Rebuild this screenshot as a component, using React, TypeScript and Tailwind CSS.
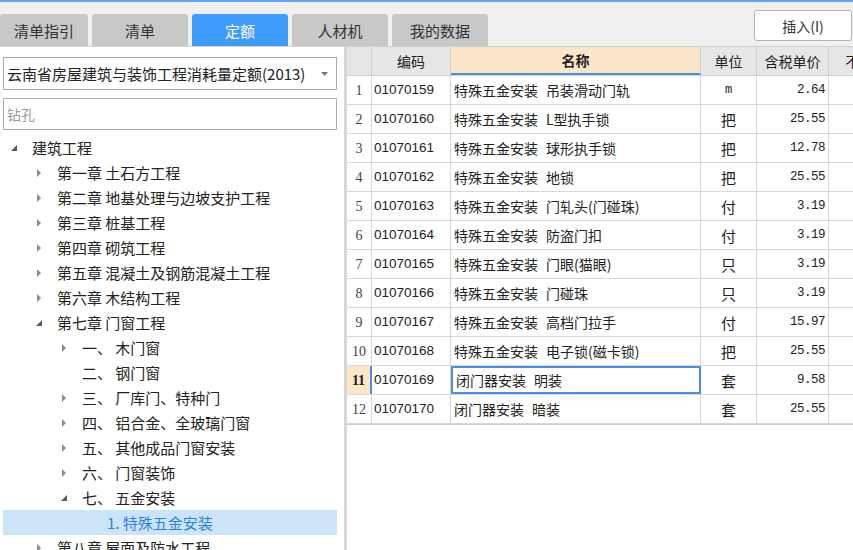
import React from 'react';

const cjk = "font-['Noto_Sans_CJK_SC','Noto_Sans',sans-serif]";

type Node = { level: number; arrow: 'open' | 'closed' | 'none'; text: string; selected?: boolean };

const tree: Node[] = [
  { level: 0, arrow: 'open', text: '建筑工程' },
  { level: 1, arrow: 'closed', text: '第一章 土石方工程' },
  { level: 1, arrow: 'closed', text: '第二章 地基处理与边坡支护工程' },
  { level: 1, arrow: 'closed', text: '第三章 桩基工程' },
  { level: 1, arrow: 'closed', text: '第四章 砌筑工程' },
  { level: 1, arrow: 'closed', text: '第五章 混凝土及钢筋混凝土工程' },
  { level: 1, arrow: 'closed', text: '第六章 木结构工程' },
  { level: 1, arrow: 'open', text: '第七章 门窗工程' },
  { level: 2, arrow: 'closed', text: '一、 木门窗' },
  { level: 2, arrow: 'none', text: '二、 钢门窗' },
  { level: 2, arrow: 'closed', text: '三、 厂库门、特种门' },
  { level: 2, arrow: 'closed', text: '四、 铝合金、全玻璃门窗' },
  { level: 2, arrow: 'closed', text: '五、 其他成品门窗安装' },
  { level: 2, arrow: 'closed', text: '六、 门窗装饰' },
  { level: 2, arrow: 'open', text: '七、 五金安装' },
  { level: 3, arrow: 'none', text: '1. 特殊五金安装', selected: true },
  { level: 1, arrow: 'closed', text: '第八章 屋面及防水工程' },
];

const rows = [
  ['01070159', '特殊五金安装 吊装滑动门轨', 'm', '2.64'],
  ['01070160', '特殊五金安装 L型执手锁', '把', '25.55'],
  ['01070161', '特殊五金安装 球形执手锁', '把', '12.78'],
  ['01070162', '特殊五金安装 地锁', '把', '25.55'],
  ['01070163', '特殊五金安装 门轧头(门碰珠)', '付', '3.19'],
  ['01070164', '特殊五金安装 防盗门扣', '付', '3.19'],
  ['01070165', '特殊五金安装 门眼(猫眼)', '只', '3.19'],
  ['01070166', '特殊五金安装 门碰珠', '只', '3.19'],
  ['01070167', '特殊五金安装 高档门拉手', '付', '15.97'],
  ['01070168', '特殊五金安装 电子锁(磁卡锁)', '把', '25.55'],
  ['01070169', '闭门器安装 明装', '套', '9.58'],
  ['01070170', '闭门器安装 暗装', '套', '25.55'],
];

const tabs = ['清单指引', '清单', '定额', '人材机', '我的数据'];

const Arrow: React.FC<{ kind: Node['arrow'] }> = ({ kind }) => {
  if (kind === 'open')
    return (
      <svg width="8" height="8" viewBox="0 0 8 8">
        <path d="M7 1 L7 7 L1 7 Z" fill="#595959" />
      </svg>
    );
  if (kind === 'closed')
    return (
      <svg width="8" height="10" viewBox="0 0 8 10">
        <path d="M2 1 L6 5 L2 9 Z" fill="#8a8a8a" />
      </svg>
    );
  return null;
};

export default function App() {
  return (
    <div className={`w-[853px] h-[550px] overflow-hidden bg-[#f0f0f0] flex flex-col ${cjk} text-[#222]`}>
      <div className="h-[2px] shrink-0 bg-[#5fa3f1]" />
      {/* tabs + insert button */}
      <div className="h-[44px] shrink-0 flex items-end justify-between">
        <div className="flex gap-[4px]">
          {tabs.map((t, i) => (
            <div
              key={t}
              className={`h-[32px] ${i === 0 ? 'w-[88px]' : 'w-[96px]'} rounded-t-[3px] flex items-center justify-center text-[15px] leading-none ${
                i === 2 ? 'bg-[#3f9bfc] text-white' : 'bg-[#c8c8c8] text-[#333]'
              }`}
            >
              {t}
            </div>
          ))}
        </div>
        <div className="self-start mt-[8px] mr-[1px] w-[98px] h-[31px] bg-white border border-[#b4b4b4] rounded-[3px] flex items-center justify-center text-[14px] leading-none text-[#333]">
          插入(I)
        </div>
      </div>

      <div className="flex-1 flex border-t border-[#d0d0d0] min-h-0">
        {/* left panel */}
        <div className="w-[344px] shrink-0 bg-white flex flex-col pt-[10px] overflow-hidden">
          <div className="shrink-0 ml-[3px] mr-[7px] h-[33px] border border-[#acacac] flex items-center justify-between pl-[3px] pr-[8px]">
            <span className="text-[15px] leading-none text-[#222]">云南省房屋建筑与装饰工程消耗量定额(2013)</span>
            <svg width="7" height="4" viewBox="0 0 7 4">
              <path d="M0 0 L7 0 L3.5 4 Z" fill="#777" />
            </svg>
          </div>
          <div className="shrink-0 ml-[3px] mr-[7px] mt-[8px] h-[32px] border border-[#acacac] flex items-center pl-[3px]">
            <span className="text-[14px] leading-none text-[#9a9a9a]">钻孔</span>
          </div>
          <div className="shrink-0 mt-[5px] flex flex-col">
            {tree.map((n, i) => (
              <div
                key={i}
                className={`shrink-0 h-[25px] ml-[3px] mr-[7px] flex items-center ${n.selected ? 'bg-[#cce4f8]' : ''}`}
              >
                <div className="shrink-0" style={{ width: 7 + n.level * 25 }} />
                <div className="w-[22px] flex items-center shrink-0">
                  <Arrow kind={n.arrow} />
                </div>
                <span
                  className={`text-[15px] leading-none whitespace-nowrap ${n.selected ? 'text-[#2f7fe0]' : 'text-[#222]'}`}
                >
                  {n.text}
                </span>
              </div>
            ))}
          </div>
        </div>

        <div className="w-[3px] shrink-0 bg-[#d6d6d6]" />

        {/* table */}
        <div className="flex-1 bg-white overflow-hidden">
          <div className="w-max">
            <div className="flex h-[29px] border-b border-[#d0d0d0] text-[14px] leading-none">
              <div className="w-[25px] bg-[#e6e6e6] border-r border-[#d0d0d0]" />
              <div className="w-[79px] bg-[#e6e6e6] border-r border-[#d0d0d0] flex items-center justify-center">编码</div>
              <div className="w-[250px] bg-[#fce6c9] border-r border-[#d0d0d0] border-b-2 border-b-[#4a90e2] flex items-center justify-center font-bold">名称</div>
              <div className="w-[56px] bg-[#e6e6e6] border-r border-[#d0d0d0] flex items-center justify-center">单位</div>
              <div className="w-[72px] bg-[#e6e6e6] border-r border-[#d0d0d0] flex items-center justify-center">含税单价</div>
              <div className="w-[104px] bg-[#e6e6e6] border-r border-[#d0d0d0] flex items-center justify-center">不含税单价</div>
            </div>
            {rows.map((r, i) => {
              const sel = i === 10;
              const sp = r[1].indexOf(' ');
              return (
                <div key={i} className="flex h-[29px] border-b border-[#d8d8d8]">
                  <div
                    className={`w-[25px] flex items-center justify-center font-['Liberation_Serif',serif] text-[14px] ${
                      sel ? 'bg-[#fce6c9] font-bold text-[#222] border-r-2 border-r-[#4a90e2]' : 'text-[#444] border-r border-[#d8d8d8]'
                    }`}
                  >
                    {i + 1}
                  </div>
                  <div className="w-[79px] border-r border-[#d8d8d8] flex items-center pl-[2px] font-['Liberation_Sans',sans-serif] text-[13.5px] text-[#222]">
                    {r[0]}
                  </div>
                  <div
                    className={`w-[250px] flex items-center pl-[3px] text-[14px] leading-none whitespace-nowrap ${
                      sel ? 'border-2 border-[#4a90e2]' : 'border-r border-[#d8d8d8]'
                    }`}
                  >
                    <span>{r[1].slice(0, sp)}</span>
                    <span className="ml-[8px]">{r[1].slice(sp + 1)}</span>
                  </div>
                  <div
                    className={`w-[56px] border-r border-[#d8d8d8] flex items-center justify-center leading-none ${
                      r[2] === 'm' ? "font-['Liberation_Mono',monospace] text-[12px]" : 'text-[15px]'
                    }`}
                  >
                    {r[2]}
                  </div>
                  <div className="w-[72px] border-r border-[#d8d8d8] flex items-center justify-end pr-[3px] font-['Liberation_Mono',monospace] text-[12.5px] tracking-[-0.5px] text-[#222]">
                    {r[3]}
                  </div>
                  <div className="w-[104px] border-r border-[#d8d8d8]" />
                </div>
              );
            })}
            <div className="h-[1px] bg-[#cfcfcf]" />
          </div>
        </div>
      </div>
    </div>
  );
}
